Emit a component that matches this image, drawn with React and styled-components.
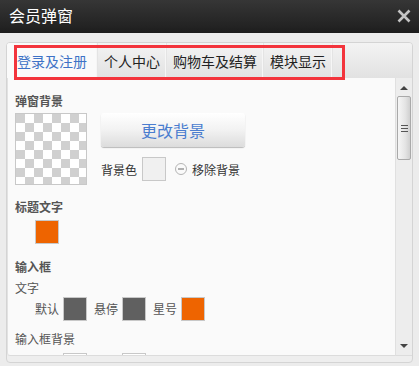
import React from "react";
import styled, { createGlobalStyle } from "styled-components";

const tabs = ["登录及注册", "个人中心", "购物车及结算", "模块显示"];

function App() {
	return (
		<>
			<GlobalStyle />
			<Window>
				<TitleBar>
					<Title>会员弹窗</Title>
					<Close viewBox="0 0 14 14">
						<path d="M1.5 1.5 L12.5 12.5 M12.5 1.5 L1.5 12.5" />
					</Close>
				</TitleBar>
				<Body>
					<Panel>
						<TabBar>
							{tabs.map((t, i) => (
								<Tab key={t} $active={i === 0} $wide={i === 0}>
									{t}
								</Tab>
							))}
						</TabBar>
						<Highlight />
						<ContentRow>
							<Content>
								<Label>弹窗背景</Label>
								<BgRow>
									<Checker />
									<BgSide>
										<ChangeButton>更改背景</ChangeButton>
										<ColorLine>
											<Text>背景色</Text>
											<Swatch $color="#f0f0f0" />
											<RemoveIcon />
											<Text>移除背景</Text>
										</ColorLine>
									</BgSide>
								</BgRow>

								<Label $top={13}>标题文字</Label>
								<SwatchRow $top={4}>
									<Swatch $color="#ee6400" />
								</SwatchRow>

								<Label $top={14}>输入框</Label>
								<Label $normal $top={3}>文字</Label>
								<SwatchRow>
									<Small>默认</Small>
									<Swatch $color="#606060" />
									<Small>悬停</Small>
									<Swatch $color="#606060" />
									<Small>星号</Small>
									<Swatch $color="#ee6400" />
								</SwatchRow>

								<Label $normal $top={9}>输入框背景</Label>
								<SwatchRow $top={5}>
									<Small>默认</Small>
									<Swatch $color="#ffffff" />
									<Small>悬停</Small>
									<Swatch $color="#ffffff" />
								</SwatchRow>
							</Content>
							<Scrollbar>
								<Arrow />
								<Thumb>
									<Grip />
								</Thumb>
								<Arrow $down />
							</Scrollbar>
						</ContentRow>
					</Panel>
				</Body>
			</Window>
		</>
	);
}

export default App;

const GlobalStyle = createGlobalStyle`
	html, body {
		margin: 0;
		padding: 0;
		background: #ececec;
	}
	body {
		font-family: "Noto Sans CJK SC", "Noto Sans", sans-serif;
	}
`;

const Window = styled.div`
	width: 419px;
	height: 366px;
	display: flex;
	flex-direction: column;
	background: #ececec;
	overflow: hidden;
`;

const TitleBar = styled.div`
	height: 33px;
	flex: none;
	display: flex;
	align-items: center;
	justify-content: space-between;
	padding: 0 8px 0 9px;
	background: linear-gradient(#363636, #232323 80%, #1c1c1c);
`;

const Title = styled.div`
	color: #fff;
	font-size: 16px;
	line-height: 20px;
	margin-top: -3px;
`;

const Close = styled.svg`
	width: 14px;
	height: 14px;
	margin-top: -2px;
	stroke: #c4c4c4;
	stroke-width: 2.6;
	fill: none;
`;

const Body = styled.div`
	flex: 1;
	min-height: 0;
	display: flex;
	padding: 9px 6px 3px 6px;
`;

const Panel = styled.div`
	position: relative;
	flex: 1;
	min-height: 0;
	display: flex;
	flex-direction: column;
	border: 1px solid #d4d4d4;
	border-radius: 4px;
	background: #eeeeee;
	padding-bottom: 6px;
	overflow: hidden;
`;

const TabBar = styled.div`
	height: 35px;
	flex: none;
	display: flex;
	background: linear-gradient(#f3f3f3, #e2e2e2);
`;

const Tab = styled.div`
	display: flex;
	align-items: center;
	padding: 0 ${(p) => (p.$wide ? "10px" : "6px")};
	font-size: 14px;
	color: ${(p) => (p.$active ? "#3d72c6" : "#222")};
	background: ${(p) => (p.$active ? "#fafafa" : "transparent")};
	border-right: 1px solid #e4e4e4;
	box-shadow: inset -1px 0 0 #f6f6f6;
`;

const Highlight = styled.div`
	position: absolute;
	left: 7px;
	top: 2px;
	width: 331px;
	height: 35px;
	box-sizing: border-box;
	border: 3px solid #f3343c;
	pointer-events: none;
`;

const ContentRow = styled.div`
	flex: 1;
	display: flex;
	min-height: 0;
`;

const Content = styled.div`
	flex: 1;
	overflow: hidden;
	background: #fafafa;
	border-left: 1px solid #e2e2e2;
	border-bottom: 1px solid #dcdcdc;
	border-bottom-left-radius: 3px;
	padding: 14px 8px 0 7px;
`;

const Label = styled.div`
	margin-top: ${(p) => p.$top || 0}px;
	font-size: 12px;
	line-height: 18px;
	color: #555;
	font-weight: ${(p) => (p.$normal ? 400 : 700)};
`;

const BgRow = styled.div`
	display: flex;
	gap: 14px;
	margin-top: 3px;
`;

const Checker = styled.div`
	width: 72px;
	height: 72px;
	box-sizing: border-box;
	border: 1px solid #c8c8c8;
	background-color: #fff;
	background-image: linear-gradient(45deg, #d0d0d0 25%, transparent 25%, transparent 75%, #d0d0d0 75%),
		linear-gradient(45deg, #d0d0d0 25%, transparent 25%, transparent 75%, #d0d0d0 75%);
	background-size: 18px 18px;
	background-position: 9px 0, 18px 9px;
`;

const BgSide = styled.div`
	display: flex;
	flex-direction: column;
	gap: 10px;
`;

const ChangeButton = styled.div`
	width: 144px;
	height: 34px;
	display: flex;
	align-items: center;
	justify-content: center;
	border-radius: 3px;
	background: linear-gradient(#ffffff, #f2f2f2 50%, #dcdcdc);
	box-shadow: 0 1px 1px #b8b8b8;
	font-size: 16px;
	color: #4a7dcf;
`;

const ColorLine = styled.div`
	display: flex;
	align-items: center;
	gap: 5px;
`;

const Text = styled.span`
	font-size: 12px;
	color: #333;
`;

const Swatch = styled.div`
	width: 24px;
	height: 24px;
	flex: none;
	box-sizing: border-box;
	border: 1px solid #c8c8c8;
	background: ${(p) => p.$color};
`;

const RemoveIcon = styled.span`
	position: relative;
	width: 12px;
	height: 12px;
	margin-left: 4px;
	box-sizing: border-box;
	border: 1.5px solid #b4b4b4;
	border-radius: 50%;

	&::after {
		content: "";
		position: absolute;
		left: 2px;
		right: 2px;
		top: 3.5px;
		height: 2px;
		background: #b0b0b0;
	}
`;

const SwatchRow = styled.div`
	display: flex;
	align-items: flex-start;
	gap: 4px;
	margin-top: ${(p) => p.$top || 0}px;
	padding-left: 20px;
	line-height: 24px;
`;

const Small = styled.span`
	font-size: 12px;
	color: #555;
	margin-left: 3px;
	&:first-child {
		margin-left: 0;
	}
`;

const Scrollbar = styled.div`
	width: 16px;
	flex: none;
	display: flex;
	flex-direction: column;
	align-items: center;
	background: #ededed;
	border-left: 1px solid #e0e0e0;
	border-bottom: 1px solid #dcdcdc;
`;

const Arrow = styled.div`
	width: 0;
	height: 0;
	border-left: 4px solid transparent;
	border-right: 4px solid transparent;
	${(p) =>
		p.$down
			? "border-top: 4px solid #444; margin-top: auto; margin-bottom: 7px;"
			: "border-bottom: 4px solid #444; margin-top: 8px;"}
`;

const Thumb = styled.div`
	width: 14px;
	height: 64px;
	margin-top: 6px;
	box-sizing: border-box;
	border: 1px solid #a9a9a9;
	border-radius: 2px;
	background: linear-gradient(90deg, #f6f6f6, #e4e4e4 60%, #d0d0d0);
	display: flex;
	align-items: center;
	justify-content: center;
`;

const Grip = styled.div`
	width: 7px;
	height: 7px;
	background: repeating-linear-gradient(#555 0 1px, transparent 1px 3px);
`;
